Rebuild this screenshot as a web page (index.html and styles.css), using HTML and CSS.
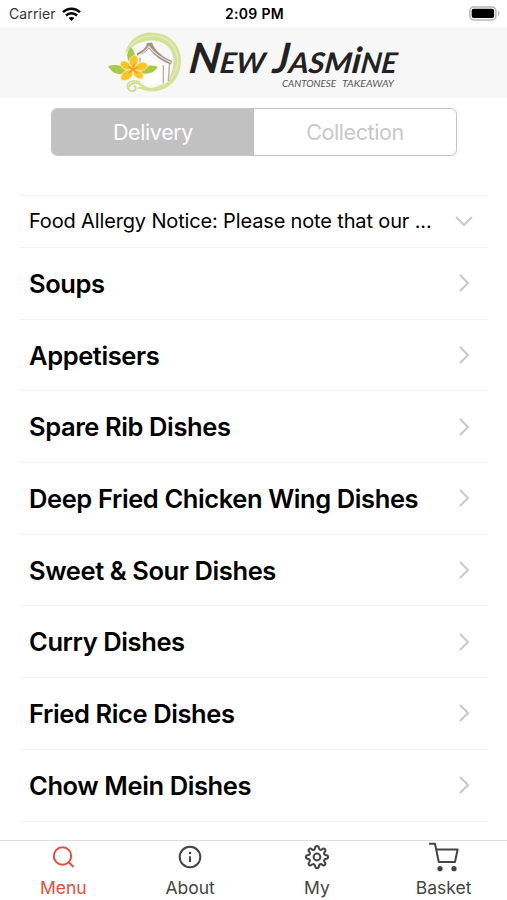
FILE: index.html
```html
<!DOCTYPE html>
<html lang="en">
<head>
    <meta charset="UTF-8">
    <meta name="viewport" content="width=device-width, initial-scale=1.0">
    <title>New Jasmine</title>
    <link rel="stylesheet" href="styles.css">
</head>
<body>

    <div class="status-bar">
        <div class="carrier">
            <span>Carrier</span>
            <svg width="19" height="14" viewBox="0 0 19 14" fill="none" stroke="#000" stroke-width="2.5">
                <path d="M1 5.2C5.7 .6 13.3 .6 18 5.2"/>
                <path d="M4 8.5c3.1-2.9 7.9-2.9 11 0"/>
                <path d="M9.5 14L6.6 11c1.6-1.5 4.2-1.5 5.8 0z" fill="#000" stroke="none"/>
            </svg>
        </div>
        <div class="time">2:09 PM</div>
        <svg class="battery" width="31" height="15" viewBox="0 0 31 15">
            <rect x=".9" y=".9" width="26" height="13" rx="4" fill="#fff" stroke="#b5b5b5" stroke-width="1.5"/>
            <rect x="2.7" y="2.7" width="22.4" height="9.4" rx="2" fill="#000"/>
            <path d="M29 5c2 1 2 4 0 5z" fill="#b5b5b5"/>
        </svg>
    </div>

    <header class="header">
        <svg class="logo" width="300" height="70" viewBox="104 27 300 70">
            <!-- brush ring -->
            <path d="M125 54C128 40 139 32 152 32.500c17 .5 29 12 29 28 0 18-12 30-28 31-8 0-12-3-16-3l2-2c4 0 7 2 11 1.500 14-1 23-11 23.500-26C174 49 165 40.500 151 40.500c-10 0-19 5-26 13.500z" fill="#d3e297"/>
            <path d="M130 46c11-13 33-14 43 0 9 13 5 31-11 39" fill="none" stroke="#e2ebb9" stroke-width="1.500"/>
            <path d="M150 89c-6 0-8-6-14-6-8 0-10 8-4 8 4 0 5-4 2-5" fill="none" stroke="#cfdf8e" stroke-width="2"/>
            <path d="M140 82c-8-3-15 1-12 7" fill="none" stroke="#cfdf8e" stroke-width="1.500"/>
            <!-- pagoda roof and walls -->
            <path d="M139 60l7-6 17 11v18l-17 2z" fill="#fff"/>
            <path d="M163 65l7-2-1 18-6 3z" fill="#fbfbf7"/>
            <path d="M137 53c5-2 9-5 10-10l5-.5c3 9 12 15 20 18.500l-1 3.500c-9-3-17-9-22-16-3 4-7 6-12 7z" fill="#a39587"/>
            <path d="M138 55.500c5-2 8-5 11-9 5 7 13 12 22 16" fill="none" stroke="#eee9e4" stroke-width="1.200"/>
            <path d="M163.300 65v18.500M169.500 64l-1.200 17M140 57.500v5" fill="none" stroke="#b5aca3" stroke-width="1.300"/>
            <!-- leaves and flower -->
            <path d="M108 66c8-2 16-1 19 6-8 5-15 1-19-6zM158 67c-7-3-15-1-19 5 7 4 15 1 19-5zM131 47c-4 4-5 9-2 15l6-1c1-6-1-10-4-14z" fill="#a7ca4b"/>
            <path d="M133 69c-7-7-3-13 3-14 4 5 2 10-3 14zM133 69c-5-9-11-10-13-5 2 6 7 7 13 5zM133 69c5-8 13-9 15-3-3 6-9 6-15 3zM133 69c9 1 12 5 9 10-6 0-10-4-9-10zM133 69c1 8-4 13-12 11-1-6 4-11 12-11z" fill="#fbc527" stroke="#fff0b0" stroke-width=".8"/>
            <path d="M133 69l-5-2.500M133 69l1-5M133 69l5-1.500M133 69l4 4M133 69l-4 4" stroke="#f39a1b" stroke-width="1.500"/>
            <g class="brand" transform="translate(188 72.500) skewX(-7)">
                <text x="0" y="0" font-size="42" textLength="31" lengthAdjust="spacingAndGlyphs">N</text>
                <text x="31" y="0" font-size="28.500" textLength="45" lengthAdjust="spacingAndGlyphs">EW</text>
                <text x="84" y="0" font-size="42" textLength="16" lengthAdjust="spacingAndGlyphs">J</text>
                <text x="100" y="0" font-size="28.500" textLength="63" lengthAdjust="spacingAndGlyphs">ASM</text>
                <text x="163" y="0" font-size="36" textLength="9" lengthAdjust="spacingAndGlyphs">i</text>
                <text x="172" y="0" font-size="28.500" textLength="36" lengthAdjust="spacingAndGlyphs">NE</text>
            </g>
            <g class="tagline">
                <text x="282" y="87.300" textLength="54" lengthAdjust="spacingAndGlyphs">CANTONESE</text>
                <text x="342" y="87.300" textLength="52" lengthAdjust="spacingAndGlyphs">TAKEAWAY</text>
            </g>
        </svg>
    </header>

    <main class="content">
        <div class="segment">
            <div class="segment-item active">Delivery</div>
            <div class="segment-item">Collection</div>
        </div>

        <div class="menu">
            <div class="row notice">
                <span>Food Allergy Notice: Please note that our ...</span>
                <svg class="chevron" viewBox="0 0 18 18"><path d="M1 5l8 8 8-8"/></svg>
            </div>
            <div class="row">
                <span>Soups</span>
                <svg class="chevron" viewBox="0 0 18 18"><path d="M5 1l8 8-8 8"/></svg>
            </div>
            <div class="row">
                <span>Appetisers</span>
                <svg class="chevron" viewBox="0 0 18 18"><path d="M5 1l8 8-8 8"/></svg>
            </div>
            <div class="row">
                <span>Spare Rib Dishes</span>
                <svg class="chevron" viewBox="0 0 18 18"><path d="M5 1l8 8-8 8"/></svg>
            </div>
            <div class="row">
                <span>Deep Fried Chicken Wing Dishes</span>
                <svg class="chevron" viewBox="0 0 18 18"><path d="M5 1l8 8-8 8"/></svg>
            </div>
            <div class="row">
                <span>Sweet &amp; Sour Dishes</span>
                <svg class="chevron" viewBox="0 0 18 18"><path d="M5 1l8 8-8 8"/></svg>
            </div>
            <div class="row">
                <span>Curry Dishes</span>
                <svg class="chevron" viewBox="0 0 18 18"><path d="M5 1l8 8-8 8"/></svg>
            </div>
            <div class="row">
                <span>Fried Rice Dishes</span>
                <svg class="chevron" viewBox="0 0 18 18"><path d="M5 1l8 8-8 8"/></svg>
            </div>
            <div class="row">
                <span>Chow Mein Dishes</span>
                <svg class="chevron" viewBox="0 0 18 18"><path d="M5 1l8 8-8 8"/></svg>
            </div>
        </div>
    </main>

    <nav class="tab-bar">
        <div class="tab active">
            <svg viewBox="0 0 32 32"><circle cx="15.500" cy="15" r="8.700"/><path d="M21.800 21.300l4.700 4.700"/></svg>
            <span>Menu</span>
        </div>
        <div class="tab">
            <svg viewBox="0 0 32 32"><circle cx="16" cy="16" r="10.300"/><path d="M16 15.200V21"/><circle class="dot" cx="16" cy="12" r="1.300"/></svg>
            <span>About</span>
        </div>
        <div class="tab">
            <svg viewBox="0 0 32 32">
                <circle cx="16" cy="16" r="3.400"/>
                <path d="M14 7.6Q14 4.9 16 4.9T18 7.6Q18.9 9.4 20.6 8.7Q22.5 6.8 23.9 8.1T23.3 11.4Q22.6 13.3 24.4 14Q27.1 14 27.1 16T24.4 18Q22.6 18.9 23.3 20.6Q25.2 22.5 23.9 23.9T20.6 23.3Q18.7 22.6 18 24.4Q18 27.1 16 27.1T14 24.4Q13.1 22.6 11.4 23.3Q9.5 25.2 8.1 23.9T8.7 20.6Q9.4 18.7 7.6 18Q4.9 18 4.9 16T7.6 14Q9.4 13.1 8.7 11.4Q6.8 9.5 8.1 8.1T11.4 8.7Q13.3 9.4 14 7.6z"/>
            </svg>
            <span>My</span>
        </div>
        <div class="tab">
            <svg viewBox="0 0 32 32">
                <path d="M1 2.700h6l3.800 18.300h16.200l2.600-12.500H8.300"/>
                <circle class="dot" cx="12" cy="27.700" r="2.600"/><circle class="dot" cx="26" cy="27.700" r="2.600"/>
            </svg>
            <span>Basket</span>
        </div>
    </nav>

</body>
</html>
```
FILE: styles.css
```css
* {
    box-sizing: border-box;
}
body {
    display: flex;
    flex-direction: column;
    height: 900px;
    margin: 0;
    overflow: hidden;
    font-family: Inter, "Liberation Sans", sans-serif;
    background-color: #fff;
    color: #000;
}
.status-bar {
    display: grid;
    grid-template-columns: 1fr auto 1fr;
    align-items: center;
    height: 27px;
    padding: 0 7px 0 9px;
    font-size: 14px;
}
.carrier {
    display: flex;
    align-items: center;
    gap: 6px;
    color: #333;
    letter-spacing: 0.1px;
}
.time {
    font-weight: 600;
    letter-spacing: 0.3px;
}
.battery {
    justify-self: end;
}
.header {
    display: flex;
    height: 71px;
    padding-left: 104px;
    background-color: #f7f7f7;
}
.brand {
    font-family: Lato, sans-serif;
    font-weight: 700;
    font-style: italic;
    fill: #222;
}
.tagline {
    font-family: Lato, sans-serif;
    font-size: 9px;
    font-style: italic;
    fill: #555;
}
.content {
    flex: 1;
    padding: 10px 19px 0 20px;
}
.segment {
    display: flex;
    width: 406px;
    height: 48px;
    margin: 0 auto 38.5px 31px;
    border: 1px solid #c5c5c5;
    border-radius: 6px;
    overflow: hidden;
}
.segment-item {
    flex: 1;
    display: flex;
    justify-content: center;
    align-items: center;
    font-size: 21.5px;
    letter-spacing: -0.4px;
    color: #c8c8c8;
}
.segment-item.active {
    background-color: #c1c1c1;
    color: #fff;
}
.menu {
    border-top: 1px solid #f2f2f2;
}
.row {
    display: flex;
    justify-content: space-between;
    align-items: center;
    height: 71.7px;
    padding: 0 15px 0 9px;
    border-bottom: 1px solid #f2f2f2;
    font-size: 25.5px;
    font-weight: 600;
    letter-spacing: -0.4px;
    white-space: nowrap;
}
.row.notice {
    height: 52.5px;
    font-size: 20px;
    font-weight: 400;
    letter-spacing: -0.15px;
}
.chevron {
    width: 18px;
    height: 18px;
    fill: none;
    stroke: #c8c8cb;
    stroke-width: 2;
}
.tab-bar {
    display: flex;
    height: 60px;
    border-top: 1px solid #dcdcdc;
    background-color: #fff;
}
.tab {
    flex: 1;
    display: flex;
    flex-direction: column;
    align-items: center;
    color: #444;
    font-size: 17.5px;
}
.tab svg {
    width: 32px;
    height: 32px;
    margin-bottom: 4px;
    fill: none;
    stroke: currentColor;
    stroke-width: 2;
    stroke-linejoin: round;
}
.tab .dot {
    fill: currentColor;
    stroke: none;
}
.tab.active {
    color: #e94b3c;
}
```
